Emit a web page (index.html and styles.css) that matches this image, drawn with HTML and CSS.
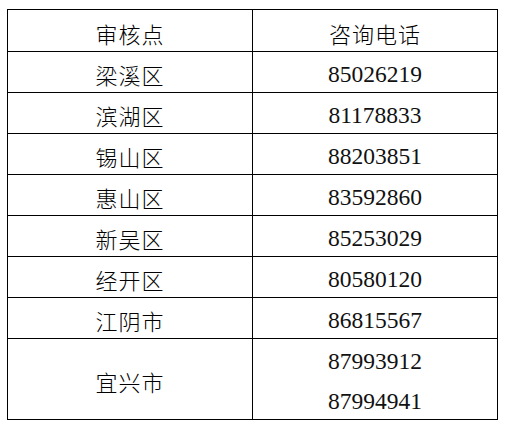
FILE: index.html
```html
<!DOCTYPE html>
<html lang="zh-CN">
<head>
<meta charset="utf-8">
<link rel="stylesheet" href="styles.css">
</head>
<body>
<table class="phone-table">
  <colgroup><col class="col-a"><col class="col-b"></colgroup>
  <tr class="head"><td class="cjk">审核点</td><td class="cjk">咨询电话</td></tr>
  <tr><td class="cjk">梁溪区</td><td class="num">85026219</td></tr>
  <tr><td class="cjk">滨湖区</td><td class="num">81178833</td></tr>
  <tr><td class="cjk">锡山区</td><td class="num">88203851</td></tr>
  <tr><td class="cjk">惠山区</td><td class="num">83592860</td></tr>
  <tr><td class="cjk">新吴区</td><td class="num">85253029</td></tr>
  <tr><td class="cjk">经开区</td><td class="num">80580120</td></tr>
  <tr><td class="cjk">江阴市</td><td class="num">86815567</td></tr>
  <tr><td class="cjk" rowspan="2">宜兴市</td><td class="num split-top">87993912</td></tr>
  <tr><td class="num split-bottom">87994941</td></tr>
</table>
</body>
</html>
```

FILE: styles.css
```css
html, body {
  margin: 0;
  padding: 0;
  background: #ffffff;
}
body {
  padding: 9px 0 0 7px;
}
.phone-table {
  border-collapse: collapse;
  width: 490px;
  table-layout: fixed;
  color: #000;
}
.col-a { width: 245px; }
.col-b { width: 245px; }
.phone-table td {
  border: 1px solid #000;
  padding: 4px 0 0 0;
  height: 36px;
  text-align: center;
  vertical-align: middle;
  line-height: 1;
}
.phone-table tr.head td {
  height: 37px;
}
.phone-table td.num {
  padding-top: 6px;
  height: 34px;
}
.cjk {
  font-family: "Noto Sans CJK SC", sans-serif;
  font-weight: 300;
  font-size: 22px;
  letter-spacing: 1px;
}
.num {
  font-family: "Liberation Serif", serif;
  font-size: 23.5px;
  color: #111;
}
.phone-table td.split-top { border-bottom: none; }
.phone-table td.split-bottom { border-top: none; }
```
